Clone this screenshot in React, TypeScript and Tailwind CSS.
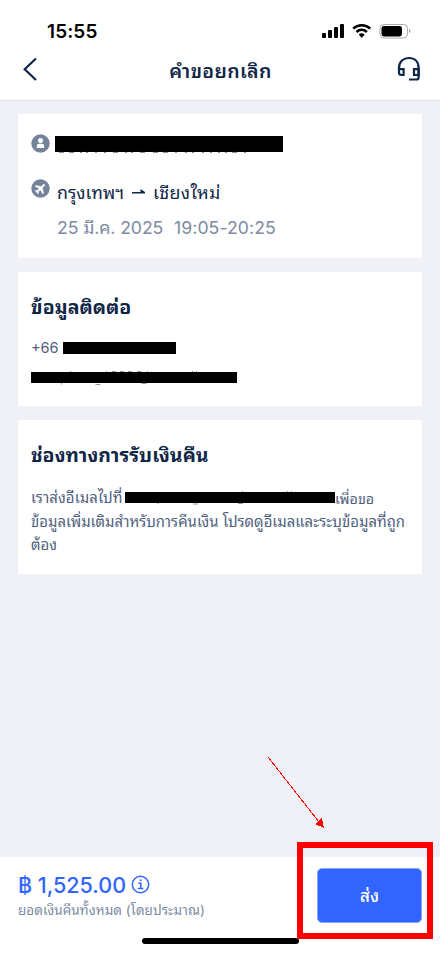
import React from "react";

const thai = "font-['Inter','Noto_Sans_Thai_Looped','Loma','Garuda','Waree','Noto_Sans',sans-serif]";

function StatusBar() {
  return (
    <div className="flex h-[47px] items-start justify-between pl-[47px] pr-[29px] pt-[20px]">
      <span className="text-[19px] font-semibold leading-[23px] tracking-[0.1px] text-black">15:55</span>
      <svg width="89" height="16" viewBox="0 0 89 16" className="mt-[3px]">
        <g fill="#000">
          <rect x="0" y="10" width="4" height="5" rx="1" />
          <rect x="6" y="7" width="4" height="8" rx="1" />
          <rect x="12" y="4" width="4" height="11" rx="1" />
          <rect x="18" y="1" width="4" height="14" rx="1" />
        </g>
        <g fill="none" stroke="#000" strokeWidth="2.500">
          <path d="M31.200 5.600a12.300 12.300 0 0 1 17 0" />
          <path d="M34.500 9a7.400 7.400 0 0 1 10.400 0" />
        </g>
        <path d="M36.800 11.600a4.300 4.300 0 0 1 5.800 0L39.700 15z" />
        <rect x="58" y="1.500" width="27.500" height="13.500" rx="4" fill="none" stroke="#aaa" />
        <rect x="59.500" y="3" width="20.500" height="10.500" rx="2.400" />
        <path d="M87 6v4c2-.6 2-3.400 0-4z" fill="#aaa" />
      </svg>
    </div>
  );
}

function NavBar() {
  return (
    <header className="flex h-[54px] items-start justify-between border-b border-[#dce3ec] pl-[22px] pr-[18px]">
      <svg width="18" height="26" viewBox="0 0 18 26" className="mr-[5px] mt-[9px]" fill="none" stroke="#102647" strokeWidth="2.200">
        <path d="M14 2.500 2.700 13.300 14 24" />
      </svg>
      <h1 className="mt-[11px] flex h-[28px] items-center whitespace-nowrap text-[19.500px] font-semibold tracking-[0.350px] text-[#102647]">คำขอยกเลิก</h1>
      <svg width="26" height="26" viewBox="0 0 26 26" className="mt-[9px]" fill="none" stroke="#102647" strokeWidth="2.200">
        <path d="M3 14V12C3 5.500 7.500 2 13 2s9.600 3.500 9.600 10v9.500q0 2-2 2H13" />
        <path d="M3 13.200h4.600v5.800H5.500C3.800 19 3 18 3 16.500zM22.600 13.200H18V19h4.600z" />
      </svg>
    </header>
  );
}

function TripCard() {
  return (
    <section className="flex h-[144px] flex-col bg-white pl-[13px] pt-[20px]">
      <div className="flex h-[20px]">
        <svg width="19" height="19" viewBox="0 0 19 19">
          <circle cx="9.500" cy="9.500" r="9.200" fill="#74839a" />
          <circle cx="9.500" cy="6.500" r="2.500" fill="#fff" />
          <path d="M5.800 13.900v-1.800c0-1.500 1-2.300 2.200-2.300h3c1.200 0 2.200.8 2.200 2.300v1.800z" fill="#fff" />
        </svg>
        <svg width="230" height="19" viewBox="0 0 230 19" className="ml-[5px]">
          <rect y="2" width="228" height="16" />
          <path d="M4 18.400h5m5 0h5m6 0h2m4 0h2m7 0h2m7 0h2m7 0h5m7 0h2m4 0h2m7 0h5m8 0h5m5 0h5m7 0h2m8 0h2m5 0h2m8 0h2m6 0h2m6 0h2m5 0h2m5 0h5m7 0h2" stroke="#55627a" strokeWidth="0.800" />
        </svg>
      </div>
      <div className="mt-[25px] flex h-[28px]">
        <svg width="19" height="19" viewBox="0 0 19 19">
          <circle cx="9.500" cy="9.500" r="9.200" fill="#74839a" />
          <path transform="translate(9.500 9.500) rotate(45) scale(.56) translate(-11.500 -12)" d="M21 16v-2l-8-5V3.500C13 2.700 12.300 2 11.500 2S10 2.700 10 3.500V9l-8 5v2l8-2.500V19l-2 1.500V22l3.500-1 3.500 1v-1.500L13 19v-5.500z" fill="#fff" stroke="#fff" />
        </svg>
        <div className="ml-[7px] flex h-[28px] items-center whitespace-nowrap text-[17.800px] text-[#102647]">
          <span className="w-[68px]">กรุงเทพฯ</span>
          <svg width="14" height="8" viewBox="0 0 14 8" className="mb-[3px] ml-[7px] mr-[7px]">
            <path d="M0 4h13v1.500H0zM8.500 1l4.500 3h-4.500z" fill="#102647" />
          </svg>
          <span className="tracking-[0.350px]">เชียงใหม่</span>
        </div>
      </div>
      <div className="mt-[8px] flex h-[27px] items-center whitespace-nowrap pl-[26px] text-[17.700px] text-[#7d8ba3]">
        <span className="w-[117px] tracking-[-0.120px]">25 มี.ค. 2025</span>
        <span className="tracking-[0.050px]">19:05-20:25</span>
      </div>
    </section>
  );
}

function ContactCard() {
  return (
    <section className="flex h-[134px] flex-col bg-white pl-[13px] pt-[21px]">
      <h2 className="flex h-[30px] items-center whitespace-nowrap text-[19.500px] font-bold tracking-[0.080px] text-[#102647]">ข้อมูลติดต่อ</h2>
      <div className="mt-[14px] flex h-[22px] items-center text-[14.500px] text-[#50617e]">
        <span className="w-[32px]">+66</span>
        <span className="h-[12px] w-[113px] bg-black" />
      </div>
      <svg width="208" height="16" viewBox="0 0 208 16" className="mt-[10px]">
        <rect y="3" width="206" height="11" />
        <path d="M39 2.500h1m35 0h1m5 0h4m4 0h4m4 0h4m5 0h4m6 0h1m44 0h1m3 0h1M30.500 14v1.500m34 0h5m41-1h5" stroke="#707c93" strokeWidth="0.800" />
      </svg>
    </section>
  );
}

function RefundCard() {
  return (
    <section className="flex h-[154px] flex-col bg-white pl-[13px] pt-[21px]">
      <h2 className="flex h-[30px] items-center whitespace-nowrap text-[19.500px] font-bold tracking-[0.080px] text-[#102647]">ช่องทางการรับเงินคืน</h2>
      <div className="mt-[16px] whitespace-nowrap text-[14.900px] leading-[23.500px] text-[#50617e]">
        <div className="flex h-[23.500px] items-center">
          <span className="w-[94px] tracking-[0.100px]">เราส่งอีเมลไปที่</span>
          <svg width="210" height="15" viewBox="0 0 210 15" className="mb-[2px]">
            <rect y="2" width="210" height="11" />
            <path d="M33 13v1m35 0h5m40-.500h5M117 1.500h1m44 0h1m3 0h1" stroke="#707c93" strokeWidth="0.800" />
          </svg>
          <span className="text-[14.300px]">เพื่อขอ</span>
        </div>
        <p>ข้อมูลเพิ่มเติมสำหรับการคืนเงิน โปรดดูอีเมลและระบุข้อมูลที่ถูก</p>
        <p>ต้อง</p>
      </div>
    </section>
  );
}

function Footer() {
  return (
    <footer className="flex h-[96px] flex-col bg-white">
      <div className="flex h-[81px] justify-between pl-[18px] pr-[18px]">
        <div className="whitespace-nowrap pt-[14px]">
          <div className="flex h-[27px] items-center text-[21.500px] font-medium text-[#3264ff]">
            <span className="w-[113px] pt-px">฿ 1,525.00</span>
            <svg width="19" height="19" viewBox="0 0 19 19" fill="none" stroke="#3264ff" strokeWidth="1.500">
              <circle cx="9.500" cy="9.500" r="8.200" />
              <path d="M7.300 8.300h2.500v5M6.800 13.500h5.600M8.700 5.300h2" />
            </svg>
          </div>
          <div className="flex h-[24px] items-center text-[13.500px] tracking-[0.050px] text-[#7d8ba3]">ยอดเงินคืนทั้งหมด (โดยประมาณ)</div>
        </div>
        <button className="mt-[11px] flex h-[55px] w-[105px] items-center justify-center rounded-[5px] border border-[#85a3ff] bg-[#3264ff] pt-[2px] text-[17px] font-medium text-white">ส่ง</button>
      </div>
      <div className="ml-[142px] h-[6px] w-[157px] rounded-full bg-black" />
    </footer>
  );
}

export default function App() {
  return (
    <div className={`relative flex h-[953px] w-[440px] flex-col overflow-hidden bg-white ${thai}`}>
      <StatusBar />
      <NavBar />
      <main className="flex flex-1 flex-col gap-[14px] bg-[#f0f1f6] px-[18px] pt-[13px]">
        <TripCard />
        <ContactCard />
        <RefundCard />
      </main>
      <Footer />
      <div className="absolute left-[297px] top-[842px] h-[97px] w-[136px] border-[6px] border-[#ff0000]" />
      <svg className="absolute left-[265px] top-[754px]" width="64" height="78" shapeRendering="crispEdges">
        <path d="M3 3 54 68" stroke="#ff0000" />
        <path d="M59 74 50 70 57 64z" fill="#ff0000" />
      </svg>
    </div>
  );
}
